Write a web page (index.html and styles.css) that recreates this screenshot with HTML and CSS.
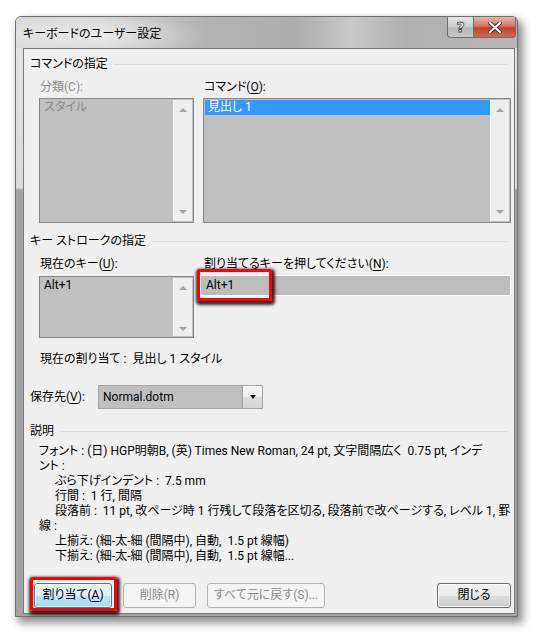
FILE: index.html
```html
<!DOCTYPE html>
<html lang="ja">
<head>
<meta charset="utf-8">
<title>キーボードのユーザー設定</title>
<link rel="stylesheet" href="styles.css">
</head>
<body>
<div class="stage">
  <div class="window">
    <div class="titlebar">
      <span class="title">キーボードのユーザー設定</span>
      <div class="caption-btns">
        <span class="cbtn help">?</span>
        <span class="cbtn close">
          <svg width="14" height="11" viewBox="0 0 14 11"><path d="M2 1 L12 10 M12 1 L2 10" stroke="#3a3a3a" stroke-width="4" stroke-linecap="square"/><path d="M2 1 L12 10 M12 1 L2 10" stroke="#fff" stroke-width="2" stroke-linecap="square"/></svg>
        </span>
      </div>
    </div>
    <div class="frame">
      <div class="client">
        <div class="group-head"><span>コマンドの指定</span><span class="rule"></span></div>
        <div class="cols">
          <div class="cell">
            <div class="label disabled">分類(C):</div>
            <div class="listbox tall">
              <div class="items"><div class="item disabled">スタイル</div></div>
              <div class="sbar light"><span class="up"></span><span class="down"></span></div>
            </div>
          </div>
          <div class="cell">
            <div class="label">コマンド(<u>O</u>):</div>
            <div class="listbox tall">
              <div class="items"><div class="item selected">見出し 1</div></div>
              <div class="sbar light"><span class="up"></span><span class="down"></span></div>
            </div>
          </div>
        </div>

        <div class="group-head second"><span>キー ストロークの指定</span><span class="rule"></span></div>
        <div class="cols keys">
          <div class="cell">
            <div class="label">現在のキー(<u>U</u>):</div>
            <div class="listbox short">
              <div class="items"><div class="item">Alt+1</div></div>
              <div class="sbar light"><span class="up"></span><span class="down"></span></div>
            </div>
          </div>
          <div class="cell marked-cell">
            <div class="label">割り当てるキーを押してください(<u>N</u>):</div>
            <div class="textbox">Alt+1</div>
            <span class="mark key-mark"></span>
          </div>
        </div>
        <div class="current">現在の割り当て :&nbsp; 見出し 1 スタイル</div>

        <div class="save-row">
          <span class="save-label">保存先(<u>V</u>):</span>
          <div class="combo"><span class="combo-text">Normal.dotm</span><span class="combo-btn"><span class="tri"></span></span></div>
        </div>

        <div class="group-head third"><span>説明</span><span class="rule"></span></div>
        <div class="desc">
          <div>フォント : (日) HGP明朝B, (英) Times New Roman, 24 pt, 文字間隔広く&nbsp; 0.75 pt, インデ</div>
          <div>ント :</div>
          <div class="ind">ぶら下げインデント :&nbsp; 7.5 mm</div>
          <div class="ind">行間 :&nbsp; 1 行, 間隔</div>
          <div class="ind">段落前 :&nbsp; 11 pt, 改ページ時 1 行残して段落を区切る, 段落前で改ページする, レベル 1, 罫</div>
          <div>線 :</div>
          <div class="ind">上揃え: (細-太-細 (間隔中), 自動,&nbsp; 1.5 pt 線幅)</div>
          <div class="ind">下揃え: (細-太-細 (間隔中), 自動,&nbsp; 1.5 pt 線幅...</div>
        </div>

        <div class="buttons">
          <span class="btn-wrap"><button class="btn default">割り当て(<u>A</u>)</button><span class="mark btn-mark"></span></span>
          <button class="btn off w-del">削除(R)</button>
          <button class="btn off w-reset">すべて元に戻す(S)...</button>
          <button class="btn w-close">閉じる</button>
        </div>
      </div>
    </div>
  </div>
</div>
</body>
</html>
```

FILE: styles.css
```css
* { box-sizing: border-box; }
html, body { margin: 0; padding: 0; background: #fff; }
body {
  width: 542px;
  height: 642px;
  overflow: hidden;
  font-family: Roboto, "Noto Sans CJK JP", sans-serif;
  font-size: 12px;
  font-feature-settings: "palt";
  color: #000;
  line-height: 16px;
}
u { text-decoration: underline; text-underline-offset: 2px; }

.stage { padding: 16px 0 0 15px; }

.window {
  width: 503px;
  height: 601px;
  border: 1px solid #6e6e6e;
  border-radius: 6px 6px 0 0;
  display: flex;
  flex-direction: column;
  box-shadow: 4px 5px 9px 1px rgba(0,0,0,0.45);
  background: #c8c8c8;
}

.titlebar {
  height: 31px;
  flex: none;
  display: flex;
  align-items: flex-start;
  border-radius: 5px 5px 0 0;
  background:
    radial-gradient(ellipse 110px 22px at 80px 18px, rgba(255,255,255,0.55), rgba(255,255,255,0) 100%),
    linear-gradient(90deg, #d9d9d9 0, #d2d2d2 90px, #b3b3b3 190px, #adadad 280px, #c9c9c9 335px, #b0b0b0 390px, #b6b6b6 100%);
}
.title {
  padding: 9px 0 0 7px;
  line-height: 16px;
  color: #000;
  font-size: 12px;
}
.caption-btns {
  margin-left: auto;
  margin-right: 1px;
  display: flex;
}
.cbtn {
  height: 21px;
  display: flex;
  align-items: center;
  justify-content: center;
  border: 1px solid #6d6d6d;
  border-top: none;
}
.help {
  width: 26px;
  border-radius: 0 0 0 4px;
  background: linear-gradient(180deg, #e4e4e4 0, #cfcfcf 45%, #b9b9b9 55%, #c8c8c8 100%);
  color: #fff;
  font-family: "DejaVu Sans", sans-serif;
  font-weight: bold;
  font-size: 14px;
  -webkit-text-stroke: 0.8px #444;
  border-right: none;
}
.close {
  width: 43px;
  border-radius: 0 0 4px 0;
  background: linear-gradient(180deg, #eab3a4 0, #d8755f 45%, #c4412a 55%, #d26a4e 100%);
}

.frame {
  flex: 1;
  padding: 0 2px 2px 7px;
  background: linear-gradient(180deg, #e2e2e2 0, #dadada 140px, #a4a4a4 142px, #a4a4a4 100%);
  display: flex;
}
.client {
  flex: 1;
  border: 1px solid #7a7a7a;
  background: #f0f0f0;
  padding: 7px 3px 0 6px;
  display: flex;
  flex-direction: column;
}

.group-head {
  display: flex;
  align-items: center;
  gap: 6px;
  margin-right: 4px;
  line-height: 16px;
}
.group-head .rule {
  flex: 1;
  height: 1px;
  background: #d5dfe5;
}
.group-head.second { margin-top: 10px; }
.group-head.third { margin-top: 14px; }

.cols {
  display: grid;
  grid-template-columns: 155px 308px;
  column-gap: 9px;
  padding-left: 9px;
  margin-top: 7px;
}
.cell { position: relative; }
.label { line-height: 16px; padding-left: 1px; height: 19px; }
.disabled { color: #8b8b8b; }

.listbox {
  border: 1px solid #828790;
  background: #c0c0c0;
  display: flex;
  padding: 1px;
}
.listbox.tall { height: 125px; }
.keys .label { height: 20px; }
.listbox.short { height: 62px; }
.items { flex: 1; }
.item { line-height: 15px; padding-left: 3px; }
.item.selected { background: #3399ff; color: #fff; }

.sbar {
  width: 19px;
  background: #eeeeee;
  border-left: 1px solid #f6f6f6;
  display: flex;
  flex-direction: column;
  justify-content: space-between;
  align-items: center;
  padding: 8px 0 7px;
}
.short .sbar { padding: 8px 0 5px; }
.sbar .up {
  width: 0; height: 0;
  border-left: 4px solid transparent;
  border-right: 4px solid transparent;
  border-bottom: 4px solid #a3a3a3;
}
.sbar .down {
  width: 0; height: 0;
  border-left: 4px solid transparent;
  border-right: 4px solid transparent;
  border-top: 4px solid #a3a3a3;
}

.textbox {
  margin-left: -3px;
  margin-top: -1px;
  height: 21px;
  border: 1px solid #fcfcfc;
  background: #bdbdbd;
  line-height: 19px;
  padding-left: 5px;
}

.mark {
  position: absolute;
  border: 3px solid #ff0000;
  border-radius: 2px;
  box-shadow: 1px 2px 3px 2px rgba(10,10,10,0.85);
  pointer-events: none;
}
.key-mark { left: -6px; top: 13px; width: 75px; height: 32px; }

.current { margin-top: 13px; padding-left: 10px; line-height: 16px; }

.save-row {
  margin-top: 18px;
  display: flex;
  align-items: center;
  height: 24px;
}
.save-label { width: 68px; }
.combo {
  width: 165px;
  height: 24px;
  border: 1px solid #a3a3a3;
  background: #c0c0c0;
  display: flex;
  align-items: center;
}
.combo-text { flex: 1; padding-left: 4px; }
.combo-btn {
  width: 20px;
  height: 22px;
  border-left: 1px solid #9d9d9d;
  background: linear-gradient(180deg, #f6f6f6 0, #ececec 50%, #dcdcdc 51%, #d6d6d6 100%);
  display: flex;
  align-items: center;
  justify-content: center;
}
.tri {
  width: 0; height: 0;
  border-left: 3.5px solid transparent;
  border-right: 3.5px solid transparent;
  border-top: 4px solid #000;
}

.desc {
  margin-top: 5px;
  padding-left: 9px;
  line-height: 15px;
  white-space: nowrap;
}
.desc .ind { padding-left: 16px; }

.buttons {
  margin-top: auto;
  margin-bottom: 5px;
  display: flex;
  align-items: center;
  gap: 11px;
  padding-left: 4px;
}
.btn-wrap { position: relative; display: flex; }
.btn {
  font: inherit;
  font-feature-settings: "palt";
  height: 25px;
  padding: 0;
  border: 1px solid #707070;
  border-radius: 3px;
  background: linear-gradient(180deg, #f2f2f2 0, #ebebeb 50%, #dddddd 51%, #cfcfcf 100%);
  color: #000;
  line-height: 21px;
  box-shadow: inset 0 0 0 1px rgba(255,255,255,0.7);
}
.btn.default {
  width: 78px;
  border-color: #3c7fb1;
  background: linear-gradient(180deg, #eaf6fd 0, #d9f0fc 50%, #bee6fd 51%, #a7d9f5 100%);
}
.btn-mark { left: -4px; top: -6px; width: 87px; height: 34px; }
.btn.off {
  border-color: #adb2b5;
  background: #f4f4f4;
  color: #8b8b8b;
  box-shadow: none;
}
.w-del { width: 73px; }
.w-reset { width: 118px; }
.w-close { width: 74px; margin-left: auto; }
```
